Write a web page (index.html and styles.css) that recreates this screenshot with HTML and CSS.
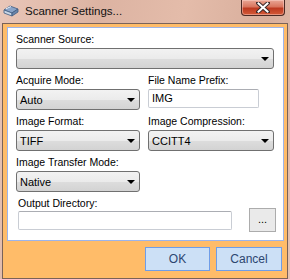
FILE: index.html
```html
<!DOCTYPE html>
<html lang="en">

<head>
  <meta charset="UTF-8">
  <title>Scanner Settings...</title>
  <link rel="stylesheet" href="styles.css">
</head>

<body>
  <div class="window">
    <div class="titlebar">
      <svg class="app-icon" width="16" height="12" viewBox="0 0 16 12">
        <path d="M1 5 L7 1 L15 4 L9 8 Z" fill="#8aa4c8" stroke="#3d5a80" stroke-width="0.8" />
        <path d="M1 5 L9 8 L9 11 L1 8 Z" fill="#c9d6e6" stroke="#3d5a80" stroke-width="0.8" />
        <path d="M9 8 L15 4 L15 7 L9 11 Z" fill="#6b86ab" stroke="#3d5a80" stroke-width="0.8" />
        <path d="M3 3.8 L8 1.5" stroke="#e8eef6" stroke-width="1" />
      </svg>
      <span class="title">Scanner Settings...</span>
      <button class="close-btn">
        <svg width="14" height="11" viewBox="0 0 14 11">
          <path d="M2 1 L12 10 M12 1 L2 10" stroke="#3a2a2a" stroke-width="4" stroke-linecap="round" />
          <path d="M2.5 1.5 L11.5 9.5 M11.5 1.5 L2.5 9.5" stroke="#fff" stroke-width="2" stroke-linecap="square" />
        </svg>
      </button>
    </div>

    <div class="frame">
      <div class="panel">
        <div class="field span">
          <label>Scanner Source:</label>
          <div class="combo"><span></span><i class="arrow"></i></div>
        </div>

        <div class="field">
          <label>Acquire Mode:</label>
          <div class="combo"><span>Auto</span><i class="arrow"></i></div>
        </div>
        <div class="field">
          <label>File Name Prefix:</label>
          <div class="textbox prefix">IMG</div>
        </div>

        <div class="field">
          <label>Image Format:</label>
          <div class="combo"><span>TIFF</span><i class="arrow"></i></div>
        </div>
        <div class="field">
          <label>Image Compression:</label>
          <div class="combo"><span>CCITT4</span><i class="arrow"></i></div>
        </div>

        <div class="field">
          <label>Image Transfer Mode:</label>
          <div class="combo"><span>Native</span><i class="arrow"></i></div>
        </div>
        <div></div>

        <div class="field span output">
          <label>Output Directory:</label>
          <div class="output-row">
            <div class="textbox dir"></div>
            <button class="browse-btn">...</button>
          </div>
        </div>
      </div>

      <div class="actions">
        <button class="dlg-btn ok">OK</button>
        <button class="dlg-btn cancel">Cancel</button>
      </div>
    </div>
  </div>
</body>

</html>
```

FILE: styles.css
```css
body {
  margin: 0;
  font-family: "Liberation Sans", Arial, sans-serif;
  font-size: 10.5px;
  color: #000;
}

.window {
  width: 290px;
  height: 279px;
  background: linear-gradient(100deg, #e9c6b8 0%, #dcb3a2 30%, #e4bcaa 55%, #d8ae9c 80%, #e6c2b4 100%);
  overflow: hidden;
}

.titlebar {
  height: 23px;
  display: flex;
  align-items: center;
  position: relative;
}

.app-icon {
  margin-left: 3px;
  margin-top: -1px;
}

.title {
  margin-left: 6px;
  font-size: 11.5px;
  color: #111;
  margin-top: -2px;
}

.close-btn {
  position: absolute;
  top: 0;
  left: 241px;
  width: 44px;
  height: 16px;
  padding: 0;
  border: 1px solid #4a2a24;
  border-top: none;
  border-radius: 0 0 4px 4px;
  background: linear-gradient(#e9a795 0%, #d9765e 45%, #bd3a20 55%, #d45a38 100%);
  box-shadow: inset 0 0 0 1px rgba(255, 220, 210, 0.45);
  display: flex;
  align-items: center;
  justify-content: center;
}

.frame {
  margin: 0 2px;
  height: 251px;
  border: 1px solid #7a6258;
  background: #ffbc69;
  padding: 3px 3px 0 4px;
}

.panel {
  background: #fff;
  border: 1px solid #9db4ea;
  height: 204px;
  padding: 5px 9px 3px 8px;
  display: grid;
  grid-template-columns: 124px 126px;
  column-gap: 8px;
  row-gap: 5px;
  align-content: start;
}

.field {
  display: flex;
  flex-direction: column;
  gap: 2px;
}

.field.span {
  grid-column: 1 / 3;
}

.field label {
  height: 13px;
  line-height: 13px;
}

.combo {
  height: 19px;
  border: 1px solid #707070;
  border-radius: 3px;
  background: linear-gradient(#f2f2f2 0%, #ebebeb 50%, #dddddd 51%, #d3d3d3 100%);
  display: flex;
  align-items: center;
  padding: 0 4px 0 3px;
  font-size: 11px;
}

.combo span {
  flex: 1;
}

.arrow {
  width: 0;
  height: 0;
  border-left: 4px solid transparent;
  border-right: 4px solid transparent;
  border-top: 4px solid #000;
}

.textbox {
  height: 17px;
  border: 1px solid #c9cdd4;
  border-top-color: #abadb3;
  border-radius: 2px;
  background: #fff;
  line-height: 17px;
  padding-left: 3px;
  box-sizing: content-box;
  font-size: 11px;
}

.prefix {
  width: 106px;
}

.output {
  padding-left: 2px;
  margin-right: -2px;
}

.output-row {
  display: flex;
  align-items: center;
  justify-content: space-between;
  margin-top: -4px;
}

.dir {
  width: 210px;
  padding-left: 2px;
}

.browse-btn {
  width: 27px;
  height: 24px;
  border: 1px solid #acacac;
  background: #eaeaea;
  font-family: inherit;
  font-size: 11px;
  padding: 0 0 3px;
}

.actions {
  display: flex;
  justify-content: flex-end;
  gap: 6px;
  margin-top: 6px;
  margin-right: 2px;
}

.dlg-btn {
  height: 24px;
  border: 1px solid #6f9de8;
  background: #cce0f6;
  color: #2c4670;
  font-family: inherit;
  font-size: 12px;
  padding: 0;
}

.ok {
  width: 65px;
}

.cancel {
  width: 66px;
}
```
